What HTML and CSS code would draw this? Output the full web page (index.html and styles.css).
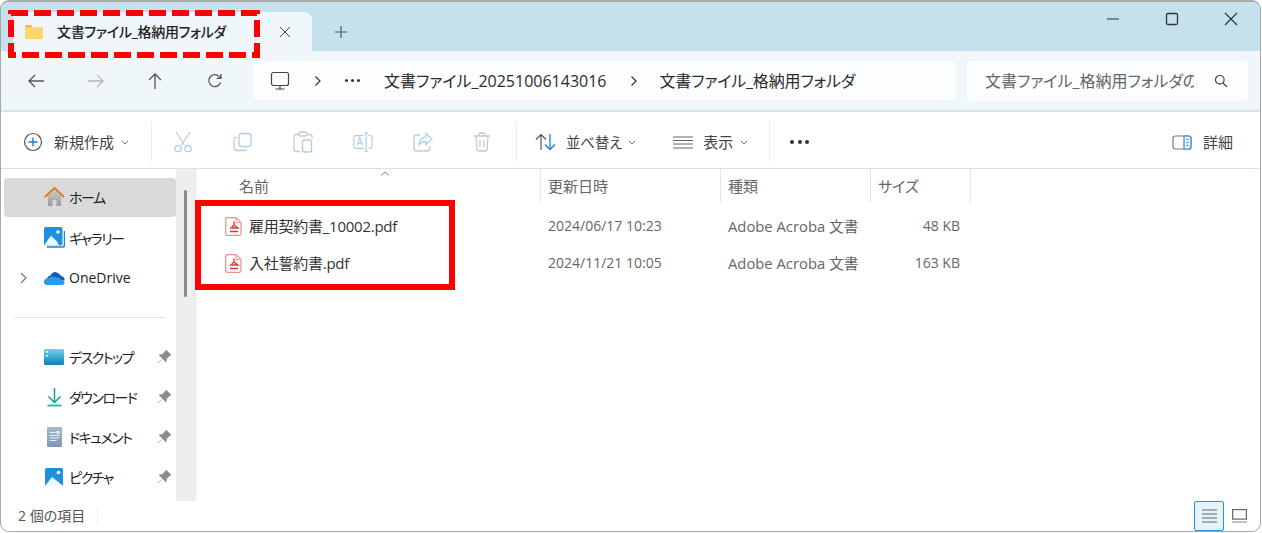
FILE: index.html
```html
<!DOCTYPE html>
<html lang="ja">
<head>
<meta charset="utf-8">
<title>文書ファイル_格納用フォルダ</title>
<link rel="stylesheet" href="styles.css">
</head>
<body>
<div class="window">
  <header class="titlebar">
    <div class="tab">
      <svg class="tab-folder" width="20" height="16" viewBox="0 0 20 16"><path d="M1 2.500C1 1.700 1.600 1 2.500 1h4.200l2 2H1z" fill="#e9b44a"/><rect x="1" y="3" width="18" height="12" rx="1.200" fill="#fbd669"/></svg>
      <span class="tab-title">文書ファイル_格納用フォルダ</span>
      <svg class="tab-close" width="12" height="12" viewBox="0 0 12 12"><path d="M1 1l10 10M11 1L1 11" stroke="#444" stroke-width="1" fill="none"/></svg>
    </div>
    <svg class="tab-add" width="14" height="14" viewBox="0 0 14 14"><path d="M7 1v12M1 7h12" stroke="#555" stroke-width="1.200" fill="none"/></svg>
    <div class="winctl">
      <svg width="14" height="14" viewBox="0 0 14 14"><path d="M1 7h12" stroke="#333" stroke-width="1.200"/></svg>
      <svg width="14" height="14" viewBox="0 0 14 14"><rect x="1.500" y="1.500" width="11" height="11" rx="1.500" stroke="#333" stroke-width="1.300" fill="none"/></svg>
      <svg width="14" height="14" viewBox="0 0 14 14"><path d="M1 1l12 12M13 1L1 13" stroke="#333" stroke-width="1.200" fill="none"/></svg>
    </div>
  </header>

  <nav class="navbar">
    <div class="navbtns">
      <svg width="18" height="16" viewBox="0 0 18 16"><path d="M17 8H2M8 2L2 8l6 6" stroke="#555" stroke-width="1.300" fill="none"/></svg>
      <svg width="18" height="16" viewBox="0 0 18 16"><path d="M1 8h15M10 2l6 6-6 6" stroke="#b5b8ba" stroke-width="1.300" fill="none"/></svg>
      <svg width="16" height="18" viewBox="0 0 16 18"><path d="M8 17V2M2 8l6-6 6 6" stroke="#555" stroke-width="1.300" fill="none"/></svg>
      <svg width="16" height="16" viewBox="0 0 16 16"><path d="M13.600 9.400A6 6 0 1 1 12.300 3.600L14 5.400M14 1v4.400H9.600" stroke="#555" stroke-width="1.300" fill="none"/></svg>
    </div>
    <div class="address">
      <svg class="pc" width="20" height="20" viewBox="0 0 20 20"><rect x="1.500" y="1.500" width="17" height="13" rx="2" stroke="#444" stroke-width="1.200" fill="none"/><path d="M10 15v3M5.500 18h9" stroke="#444" stroke-width="1.200" fill="none"/></svg>
      <svg class="crumb-sep first" width="8" height="12" viewBox="0 0 8 12"><path d="M1.500 1.500L6 6l-4.500 4.500" stroke="#333" stroke-width="1.200" fill="none"/></svg>
      <span class="dots"><b></b><b></b><b></b></span>
      <span class="crumb">文書ファイル_20251006143016</span>
      <svg class="crumb-sep" width="8" height="12" viewBox="0 0 8 12"><path d="M1.500 1.500L6 6l-4.500 4.500" stroke="#333" stroke-width="1.200" fill="none"/></svg>
      <span class="crumb last">文書ファイル_格納用フォルダ</span>
    </div>
    <div class="search">
      <span class="search-text">文書ファイル_格納用フォルダの検索</span>
      <svg width="14" height="14" viewBox="0 0 14 14"><circle cx="5.800" cy="5.800" r="4.300" stroke="#444" stroke-width="1.200" fill="none"/><path d="M9 9l4 4" stroke="#444" stroke-width="1.300"/></svg>
    </div>
  </nav>

  <section class="toolbar">
    <div class="tool new">
      <svg width="20" height="20" viewBox="0 0 20 20"><circle cx="10" cy="10" r="8.500" stroke="#555" stroke-width="1.200" fill="none"/><path d="M10 5.500v9M5.500 10h9" stroke="#1a7fd4" stroke-width="1.400"/></svg>
      <span>新規作成</span>
      <svg class="chev" width="8" height="5" viewBox="0 0 8 5"><path d="M1 1l3 3 3-3" stroke="#777" fill="none"/></svg>
    </div>
    <i class="tsep"></i>
    <div class="disabled-tools">
      <svg width="20" height="22" viewBox="0 0 20 22"><path d="M3 1l8.500 13M17 1L8.500 14" stroke="#c4c4c4" stroke-width="1.100" fill="none"/><circle cx="5" cy="17.500" r="3.200" stroke="#a9d0ee" stroke-width="1.300" fill="none"/><circle cx="15" cy="17.500" r="3.200" stroke="#a9d0ee" stroke-width="1.300" fill="none"/></svg>
      <svg width="20" height="20" viewBox="0 0 20 20"><path d="M4 5.500H3A2 2 0 0 0 1 7.500v8a3 3 0 0 0 3 3h7a2 2 0 0 0 2-2" stroke="#c8c8c8" stroke-width="1.300" fill="none"/><rect x="6" y="1.500" width="12" height="13" rx="2.500" stroke="#a9d0ee" stroke-width="1.300" fill="none"/></svg>
      <svg width="20" height="22" viewBox="0 0 20 22"><path d="M6 3.500H3A2 2 0 0 0 1 5.500v13a2 2 0 0 0 2 2h4M14 3.500h3A2 2 0 0 1 19 5.500v2" stroke="#c8c8c8" stroke-width="1.300" fill="none"/><rect x="6" y="1" width="8" height="4" rx="1.500" stroke="#c8c8c8" stroke-width="1.300" fill="none"/><rect x="9.500" y="9" width="9" height="12" rx="2" stroke="#a9d0ee" stroke-width="1.300" fill="none"/></svg>
      <svg width="20" height="20" viewBox="0 0 22 22"><path d="M12 4H3A2 2 0 0 0 1 6v10a2 2 0 0 0 2 2h9M17 4h2a2 2 0 0 1 2 2v10a2 2 0 0 1-2 2h-2" stroke="#c8c8c8" stroke-width="1.300" fill="none"/><path d="M14.500 1v20M12.500 1h4M12.500 21h4" stroke="#a9d0ee" stroke-width="1.300" fill="none"/><path d="M4.500 15l3-9 3 9M5.500 12.500h4" stroke="#a9d0ee" stroke-width="1.300" fill="none"/></svg>
      <svg width="20" height="20" viewBox="0 0 20 20"><path d="M7 3H4a3 3 0 0 0-3 3v10a3 3 0 0 0 3 3h10a3 3 0 0 0 3-3v-2" stroke="#c8c8c8" stroke-width="1.300" fill="none"/><path d="M13 1.500L19 7l-6 5.500V9.500c-3.500 0-5.500 1-7 4 0-5 2.500-8 7-8.500z" stroke="#a9d0ee" stroke-width="1.300" fill="none"/></svg>
      <svg width="18" height="20" viewBox="0 0 18 20"><path d="M1 4h16M6 4V3a2 2 0 0 1 2-2h2a2 2 0 0 1 2 2v1M3 4l1 13a2 2 0 0 0 2 2h6a2 2 0 0 0 2-2l1-13M7 8v7M11 8v7" stroke="#c8c8c8" stroke-width="1.300" fill="none"/></svg>
    </div>
    <i class="tsep"></i>
    <div class="tool sort">
      <svg width="21" height="18" viewBox="0 0 21 18"><path d="M6 17V1.500M1 6.500l5-5 5 5" stroke="#555" stroke-width="1.200" fill="none"/><path d="M15 1v15.500M10 11.500l5 5 5-5" stroke="#1a7fd4" stroke-width="1.300" fill="none"/></svg>
      <span>並べ替え</span>
      <svg class="chev" width="8" height="5" viewBox="0 0 8 5"><path d="M1 1l3 3 3-3" stroke="#777" fill="none"/></svg>
    </div>
    <div class="tool view">
      <svg width="20" height="13" viewBox="0 0 20 13"><path d="M0 1h20M0 4.500h20M0 8h20M0 12h20" stroke="#666" stroke-width="1"/></svg>
      <span>表示</span>
      <svg class="chev" width="8" height="5" viewBox="0 0 8 5"><path d="M1 1l3 3 3-3" stroke="#777" fill="none"/></svg>
    </div>
    <i class="tsep"></i>
    <div class="more"><b></b><b></b><b></b></div>
    <div class="details">
      <svg width="20" height="15" viewBox="0 0 20 15"><rect x="1" y="1" width="18" height="13" rx="2.500" stroke="#777" stroke-width="1.200" fill="none"/><path d="M12 1h5a2 2 0 0 1 2 2v9a2 2 0 0 1-2 2h-5z" fill="#e6f2fb" stroke="#2b8fdc" stroke-width="1.200"/><path d="M14.500 4.500h2M14.500 7.500h2M14.500 10.500h2" stroke="#2b8fdc"/></svg>
      <span>詳細</span>
    </div>
  </section>

  <main class="main">
    <aside class="sidebar">
      <div class="nav-item selected">
        <svg class="nav-icon" width="21" height="20" viewBox="0 0 21 20"><defs><linearGradient id="hm" x1="0" y1="0" x2="0" y2="1"><stop offset="0" stop-color="#c9c9c9"/><stop offset="1" stop-color="#9c9c9c"/></linearGradient></defs><path d="M4 9l6.500-6L17 9v10h-4.500v-6h-4v6H4z" fill="url(#hm)"/><path d="M1 10l9.500-9L20 10" stroke="#e07a1f" stroke-width="2" fill="none"/></svg>
        <span class="kana">ホーム</span>
      </div>
      <div class="nav-item">
        <svg class="nav-icon" width="21" height="21" viewBox="0 0 21 21"><path d="M3 20h15.500a2 2 0 0 0 2-2V4" stroke="#2b7cc4" stroke-width="1.500" fill="none"/><rect x="0" y="0" width="18.500" height="18.500" rx="1.500" fill="#1f8fe0"/><path d="M0 18.500L7 8.500l6 6 2 4z" fill="#e9f6fd"/><circle cx="14" cy="5" r="1.800" fill="#fff"/></svg>
        <span class="kana">ギャラリー</span>
      </div>
      <div class="nav-item">
        <svg class="expander" width="7" height="12" viewBox="0 0 7 12"><path d="M1 1l5 5-5 5" stroke="#777" stroke-width="1.200" fill="none"/></svg>
        <svg class="nav-icon" width="21" height="14" viewBox="0 0 21 14"><path d="M3 7a4 4 0 0 1 3.500-2.500C8 1.500 11 0 13.500 2c1.500 .5 3 1.500 3.500 3C19.500 5.500 21 7 20.500 9.500L8 10z" fill="#0f5fb5"/><path d="M3 14a3 3 0 0 1-3-3.500C.2 8 2.500 6.500 5 7c1.500-2 5-2 7-.5 2-.5 4 .5 5 2.500 2 0 3.500 1 3.500 2.500S19.500 14 18 14z" fill="#2a9be8"/></svg>
        <span>OneDrive</span>
      </div>
      <hr class="nav-line">
      <div class="nav-item">
        <svg class="nav-icon" width="21" height="16" viewBox="0 0 21 16"><defs><linearGradient id="dk" x1="0" y1="0" x2="0" y2="1"><stop offset="0" stop-color="#6fd3e8"/><stop offset="1" stop-color="#0f7fb3"/></linearGradient></defs><rect width="20" height="16" rx="1.200" fill="url(#dk)"/><rect x="2" y="2" width="2" height="1.500" fill="#fff"/><rect x="2" y="6" width="2" height="1.500" fill="#fff"/></svg>
        <span class="kana">デスクトップ</span>
        <svg class="pin" width="13" height="13" viewBox="0 0 13 13"><path d="M8 0l5 5-1.500 .8-3 3L8 12 1 5l3.200-.5 3-3zM3.500 9.500L0 13" fill="#8d8d8d" stroke="#8d8d8d" stroke-width=".7"/></svg>
      </div>
      <div class="nav-item">
        <svg class="nav-icon" width="21" height="20" viewBox="0 0 21 20"><path d="M10.500 1v14M4.500 9.500l6 6 6-6" stroke="#16a085" stroke-width="1.500" fill="none"/><path d="M3.500 18.500h14" stroke="#1abc9c" stroke-width="1.800"/></svg>
        <span class="kana">ダウンロード</span>
        <svg class="pin" width="13" height="13" viewBox="0 0 13 13"><path d="M8 0l5 5-1.500 .8-3 3L8 12 1 5l3.200-.5 3-3zM3.500 9.500L0 13" fill="#8d8d8d" stroke="#8d8d8d" stroke-width=".7"/></svg>
      </div>
      <div class="nav-item">
        <svg class="nav-icon" width="21" height="20" viewBox="0 0 21 20"><defs><linearGradient id="dc" x1="0" y1="0" x2="0" y2="1"><stop offset="0" stop-color="#a5b9cf"/><stop offset="1" stop-color="#7b98b8"/></linearGradient></defs><rect x="3" width="15" height="20" rx="1" fill="url(#dc)"/><path d="M5.500 5.500h6M5.500 8.500h10M5.500 11h10M5.500 13.500h7" stroke="#e9f0f6"/><rect x="12.500" y="4" width="3" height="3" fill="#e9f0f6"/></svg>
        <span class="kana">ドキュメント</span>
        <svg class="pin" width="13" height="13" viewBox="0 0 13 13"><path d="M8 0l5 5-1.500 .8-3 3L8 12 1 5l3.200-.5 3-3zM3.500 9.500L0 13" fill="#8d8d8d" stroke="#8d8d8d" stroke-width=".7"/></svg>
      </div>
      <div class="nav-item">
        <svg class="nav-icon" width="21" height="18" viewBox="0 0 21 18"><rect x="1" width="18" height="18" rx="1.500" fill="#1f8fe0"/><path d="M1 18L8 9l7 5.500 4 3.500z" fill="#eef8fd"/><circle cx="14.500" cy="4.500" r="1.800" fill="#fff"/></svg>
        <span class="kana">ピクチャ</span>
        <svg class="pin" width="13" height="13" viewBox="0 0 13 13"><path d="M8 0l5 5-1.500 .8-3 3L8 12 1 5l3.200-.5 3-3zM3.500 9.500L0 13" fill="#8d8d8d" stroke="#8d8d8d" stroke-width=".7"/></svg>
      </div>
    </aside>
    <div class="scrollbar"><div class="thumb"></div></div>
    <section class="files">
      <div class="header-row">
        <div class="col name">名前<svg class="sort-caret" width="10" height="5" viewBox="0 0 10 5"><path d="M1 4.500L5 1l4 3.500" stroke="#888" stroke-width="1" fill="none"/></svg></div>
        <div class="col date">更新日時</div>
        <div class="col type">種類</div>
        <div class="col size">サイズ</div>
      </div>
      <div class="file-row">
        <div class="col name"><svg class="pdf" width="18" height="19" viewBox="0 0 18 19"><path d="M2.500 .7h8.500l5 5v10.800a1.800 1.800 0 0 1-1.800 1.800H2.500A1.800 1.800 0 0 1 .7 16.500V2.500A1.800 1.800 0 0 1 2.500 .7z" fill="#fff" stroke="#ee8e88" stroke-width="1.200"/><path d="M11 .7v5h5" fill="none" stroke="#ee8e88"/><path d="M9 4.500V8L5 12M9 8l4 3H7M5 14.500h8" stroke="#d8372c" stroke-width="1.300" fill="none"/></svg><span>雇用契約書_10002.pdf</span></div>
        <div class="col date">2024/06/17 10:23</div>
        <div class="col type">Adobe Acroba 文書</div>
        <div class="col size">48 KB</div>
      </div>
      <div class="file-row">
        <div class="col name"><svg class="pdf" width="18" height="19" viewBox="0 0 18 19"><path d="M2.500 .7h8.500l5 5v10.800a1.800 1.800 0 0 1-1.800 1.800H2.500A1.800 1.800 0 0 1 .7 16.500V2.500A1.800 1.800 0 0 1 2.500 .7z" fill="#fff" stroke="#ee8e88" stroke-width="1.200"/><path d="M11 .7v5h5" fill="none" stroke="#ee8e88"/><path d="M9 4.500V8L5 12M9 8l4 3H7M5 14.500h8" stroke="#d8372c" stroke-width="1.300" fill="none"/></svg><span>入社誓約書.pdf</span></div>
        <div class="col date">2024/11/21 10:05</div>
        <div class="col type">Adobe Acroba 文書</div>
        <div class="col size">163 KB</div>
      </div>
    </section>
  </main>

  <footer class="statusbar">
    <span class="count">2 個の項目</span>
    <i class="status-sep"></i>
    <div class="viewbtns">
      <div class="viewbtn active"><svg width="15" height="14" viewBox="0 0 15 14"><path d="M0 1h15M0 5h15M0 9h15M0 13h15" stroke="#666" stroke-width="1.200"/></svg></div>
      <div class="viewbtn"><svg width="15" height="14" viewBox="0 0 15 14"><rect x=".6" y=".6" width="13.800" height="9.500" fill="none" stroke="#666" stroke-width="1.200"/><path d="M0 13h15" stroke="#888" stroke-width="1.200"/></svg></div>
    </div>
  </footer>
</div>

<svg class="mark-tab" width="252" height="48" viewBox="0 0 252 48"><rect x="3" y="3" width="246" height="42" fill="none" stroke="#fe0000" stroke-width="6" stroke-dasharray="17 6"/></svg>
<div class="mark-files"></div>
</body>
</html>
```
FILE: styles.css
```css
* { box-sizing: border-box; }
html, body { margin: 0; height: 100%; background: #fff; overflow: hidden; }
body {
  position: relative;
  font-family: "Open Sans", "Noto Sans CJK JP", sans-serif;
  font-feature-settings: "palt";
  font-size: 14px;
  color: #333;
}
svg { display: block; flex: none; }

.window {
  width: 1261px;
  height: 532px;
  display: flex;
  flex-direction: column;
  border: 1px solid #a8a8a8;
  border-top-width: 2px;
  border-radius: 9px;
  overflow: hidden;
  background: #fff;
}

.titlebar {
  height: 49px;
  flex: none;
  display: flex;
  align-items: flex-end;
  background: #c5e2ec;
}
.tab {
  width: 299px;
  height: 39px;
  margin-left: 12px;
  padding: 0 21px 0 11px;
  display: flex;
  align-items: center;
  background: #eff7fa;
  border-radius: 8px 8px 0 0;
}
.tab-title { margin-left: 13px; padding-bottom: 2px; font-size: 14px; letter-spacing: -.3px; color: #222; font-weight: 500; flex: 1; }
.tab-add { margin: 0 0 12px 22px; }
.winctl {
  margin-left: auto;
  align-self: flex-start;
  display: flex;
  gap: 45px;
  padding: 10px 22px 0 0;
}

.navbar {
  height: 61px;
  flex: none;
  display: flex;
  align-items: flex-start;
  padding-top: 10px;
  background: #eff7fa;
  border-bottom: 2px solid #d5e3e8;
}
.navbtns {
  width: 252px;
  height: 39px;
  display: grid;
  grid-template-columns: repeat(4, 59.700px);
  justify-items: center;
  align-items: center;
  padding-left: 5px;
}
.address {
  width: 703px;
  height: 39px;
  display: flex;
  align-items: center;
  background: #fbfdfe;
  border-radius: 5px;
  font-size: 16px;
  color: #2b2b2b;
  padding-left: 17px;
}
.crumb-sep.first { margin: 0 0 0 24px; }
.dots { display: flex; gap: 3px; margin: 0 23px 0 23px; width: 16px; }
.dots b { width: 3px; height: 3px; border-radius: 50%; background: #333; flex: none; }
.crumb { white-space: nowrap; padding-bottom: 2px; }
.crumb.last { letter-spacing: -.15px; }
.crumb + .crumb-sep { margin: 0 22px 0 23px; }

.search {
  width: 282px;
  height: 40px;
  margin-left: 10px;
  display: flex;
  align-items: center;
  background: #fbfdfe;
  border-radius: 5px;
  padding: 0 20px 0 19px;
  font-size: 16px;
  color: #666;
}
.search-text { width: 210px; overflow: hidden; white-space: nowrap; margin-right: 20px; padding-bottom: 2px; }

.toolbar {
  height: 57px;
  flex: none;
  display: flex;
  align-items: center;
  padding-top: 4px;
  background: #fff;
  border-bottom: 1px solid #d5e3e8;
  font-size: 15px;
  color: #444;
}
.tool { display: flex; align-items: center; }
.tool span { margin-left: 11px; padding-bottom: 2px; }
.chev { margin-left: 7px; }
.new { margin-left: 22px; }
.new + .tsep { margin-left: 22px; }
.tsep { width: 1px; height: 40px; background: #ececec; flex: none; }
.disabled-tools { display: flex; align-items: center; gap: 40px; padding: 0 25px 0 21px; }
.sort { margin-left: 18px; }
.sort span { margin-left: 10px; font-size: 14.300px; }
.sort .chev { margin-left: 6px; }
.view { margin-left: 37px; }
.view span { margin-left: 10px; }
.view + .tsep { margin-left: 21px; }
.more { display: flex; gap: 3.500px; margin-left: 20px; }
.more b { width: 4px; height: 4px; border-radius: 50%; background: #333; }
.details { display: flex; align-items: center; gap: 11px; margin-left: auto; padding-right: 27px; }
.details span { padding-bottom: 2px; }

.main { flex: 1; min-height: 0; display: flex; }
.sidebar { width: 175px; padding: 9px 0 0 3px; flex: none; font-size: 14px; color: #222; }
.nav-item { height: 40px; padding-bottom: 1px; display: flex; align-items: center; position: relative; padding-left: 40px; }
.nav-item.selected { background: #d9d9d9; border-radius: 4px; height: 39px; margin-bottom: 1px; }
.nav-icon { width: 21px; margin-right: 4px; }
.nav-item .expander { position: absolute; left: 16px; top: 14px; }
.kana { letter-spacing: -1.500px; }
.pin { margin-left: auto; margin-right: 5px; }
.nav-line { border: 0; height: 1px; background: #e2e2e2; margin: 19px 11px 19px 10px; }

.scrollbar { width: 20px; flex: none; background: #eee; padding: 21px 0 0 8px; }
.thumb { width: 3px; height: 107px; border-radius: 2px; background: #8a8a8a; }

.files { flex: 1; min-width: 0; border-left: 1px solid #f6f6f6; }
.header-row, .file-row { display: grid; grid-template-columns: 344px 180px 150px 100px; }
.header-row { height: 34px; color: #666; font-size: 15px; margin-bottom: 5px; }
.header-row .col { display: flex; align-items: center; padding: 0 0 2px 7px; border-right: 1px solid #e6e6e6; position: relative; }
.header-row .name { padding-left: 42px; }
.sort-caret { position: absolute; left: 183px; top: 2px; }
.file-row { height: 37px; align-items: center; font-size: 14px; color: #666; }
.file-row .col { padding: 0 0 2px 7px; white-space: nowrap; }
.file-row .name { display: flex; align-items: center; padding: 0 0 0 28px; color: #333; font-size: 15px; letter-spacing: -.25px; }
.file-row .name span { padding-bottom: 2px; }
.file-row .type { font-size: 14.800px; }
.pdf { margin-right: 6px; }
.file-row .size { text-align: right; padding-right: 11px; }

.statusbar { height: 30px; flex: none; display: flex; align-items: center; padding-left: 17px; font-size: 14px; color: #555; }
.count { padding-bottom: 2px; }
.status-sep { width: 1px; height: 16px; background: #eee; margin-left: 12px; }
.viewbtns { margin-left: auto; display: flex; padding-right: 6px; align-self: stretch; }
.viewbtn { width: 30px; display: flex; align-items: center; justify-content: center; }
.viewbtn.active { background: #e5f3fb; border: 1px solid #2b8fdc; border-radius: 2px; }

.mark-tab { position: absolute; left: 8px; top: 10px; }
.mark-files { position: absolute; left: 195px; top: 200px; width: 260px; height: 90px; border: 6px solid #fe0000; }
```
